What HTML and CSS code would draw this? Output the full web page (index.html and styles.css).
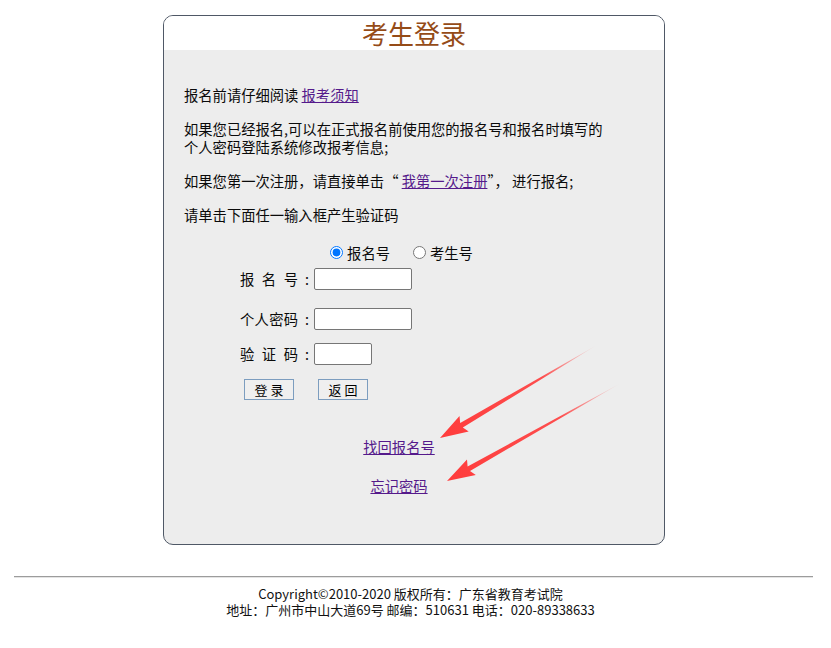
FILE: index.html
```html
<!DOCTYPE html>
<html lang="zh-CN">
<head>
<meta charset="utf-8">
<title>考生登录</title>
<link rel="stylesheet" href="styles.css">
</head>
<body>
<div class="card">
  <div class="card-head">考生登录</div>
  <div class="card-body">
    <p>报名前请仔细阅读 <a href="#">报考须知</a></p>
    <p>如果您已经报名,可以在正式报名前使用您的报名号和报名时填写的个人密码登陆系统修改报考信息;</p>
    <p>如果您第一次注册，请直接单击“ <a href="#">我第一次注册</a>”， 进行报名;</p>
    <p>请单击下面任一输入框产生验证码</p>
    <div class="radios">
      <label class="opt"><input type="radio" name="t" checked>报名号</label>
      <label class="opt"><input type="radio" name="t">考生号</label>
    </div>
    <div class="form">
      <div class="row row1"><span class="lab">报 名 号</span><span class="colon">:</span><input class="inp" type="text"></div>
      <div class="row row2"><span class="lab">个人密码</span><span class="colon">:</span><input class="inp" type="password"></div>
      <div class="row row3"><span class="lab">验 证 码</span><span class="colon">:</span><input class="inp short" type="text"></div>
      <div class="btns"><button class="btn" type="button">登 录</button><button class="btn" type="button">返 回</button></div>
    </div>
    <div class="link-row first"><a href="#">找回报名号</a></div>
    <div class="link-row second"><a href="#">忘记密码</a></div>
  </div>
</div>
<hr class="rule">
<div class="footer">
  <div>Copyright©2010-2020 版权所有：广东省教育考试院</div>
  <div>地址：广州市中山大道69号 邮编：510631 电话：020-89338633</div>
</div>
<svg class="arrows" width="831" height="648" viewBox="0 0 831 648" aria-hidden="true">
  <defs>
    <linearGradient id="g1" gradientUnits="userSpaceOnUse" x1="597" y1="345" x2="440" y2="438">
      <stop offset="0" stop-color="#ff3c3c" stop-opacity="0"/>
      <stop offset="0.35" stop-color="#ff3c3c" stop-opacity="0.9"/>
      <stop offset="1" stop-color="#ff3c3c"/>
    </linearGradient>
    <linearGradient id="g2" gradientUnits="userSpaceOnUse" x1="621" y1="383" x2="447" y2="481">
      <stop offset="0" stop-color="#ff3c3c" stop-opacity="0"/>
      <stop offset="0.35" stop-color="#ff3c3c" stop-opacity="0.9"/>
      <stop offset="1" stop-color="#ff3c3c"/>
    </linearGradient>
  </defs>
  <polygon fill="url(#g1)" points="597,345 462.8,427.4 468.7,431.5 440,438 459.5,415.9 460.2,423.0"/>
  <polygon fill="url(#g2)" points="621,383 470.0,470.9 475.8,475.0 447,481 467.0,459.4 467.6,466.5"/>
</svg>
</body>
</html>
```

FILE: styles.css
```css
html, body {
  margin: 0;
  padding: 0;
  background: #fff;
}
body {
  position: relative;
  width: 831px;
  height: 648px;
  overflow: hidden;
  font-family: "Noto Sans CJK SC", "Noto Sans", sans-serif;
  font-size: 14.3px;
  color: #0a0a0a;
}
.card {
  width: 500px;
  margin: 15px 0 0 163px;
  border: 1px solid #4f5866;
  border-radius: 10px;
  overflow: hidden;
  background: #ededed;
}
.card-head {
  height: 34px;
  line-height: 34px;
  background: #fff;
  text-align: center;
  font-size: 26px;
  color: #954b17;
}
.card-body {
  padding: 20px 50px 49px 20px;
}
.card-body p {
  margin: 16px 0;
  line-height: 18px;
}
a {
  color: #551a8b;
  text-decoration: underline;
}
.radios {
  height: 24px;
  display: flex;
  align-items: center;
  justify-content: center;
  gap: 18px;
}
.opt {
  display: flex;
  align-items: center;
}
.opt input {
  width: 13px;
  height: 13px;
  margin: 0 4px 0 5px;
}
.form {
  margin-left: 56px;
}
.row {
  display: flex;
  align-items: center;
  height: 22px;
}
.row1 { margin-top: 4px; }
.row2 { margin-top: 18px; }
.row3 { margin-top: 13px; }
.lab {
  display: inline-block;
  width: 58px;
  text-align: justify;
  text-align-last: justify;
  line-height: 18px;
}
.colon {
  width: 16px;
  text-align: center;
  line-height: 18px;
  padding-left: 2px;
  box-sizing: border-box;
}
.inp {
  box-sizing: border-box;
  width: 98px;
  height: 22px;
  margin: 0;
  padding: 1px 2px;
  border: 1px solid #767676;
  border-radius: 2px;
  background: #fff;
}
.inp.short {
  width: 58px;
}
.btns {
  display: flex;
  gap: 24px;
  margin: 14px 0 0 4px;
}
.btn {
  box-sizing: border-box;
  width: 50px;
  height: 21px;
  margin: 0;
  padding: 0;
  border: 1px solid #7c9dbf;
  background: #efefef;
  font-family: "Noto Sans CJK SC", sans-serif;
  font-size: 13px;
  color: #000;
  line-height: 19px;
}
.link-row {
  text-align: center;
  line-height: 18px;
}
.link-row.first { margin-top: 38px; }
.link-row.second { margin-top: 21px; }
.rule {
  width: 799px;
  height: 0;
  margin: 31px 0 0 14px;
  border: 0;
  border-top: 1px solid #9c9c9c;
  border-bottom: 1px solid #e4e4e4;
}
.footer {
  width: 793px;
  margin: 8px 0 0 14px;
  text-align: center;
  font-size: 13px;
  line-height: 16px;
  color: #111;
}
.arrows {
  position: absolute;
  left: 0;
  top: 0;
  pointer-events: none;
}
```
